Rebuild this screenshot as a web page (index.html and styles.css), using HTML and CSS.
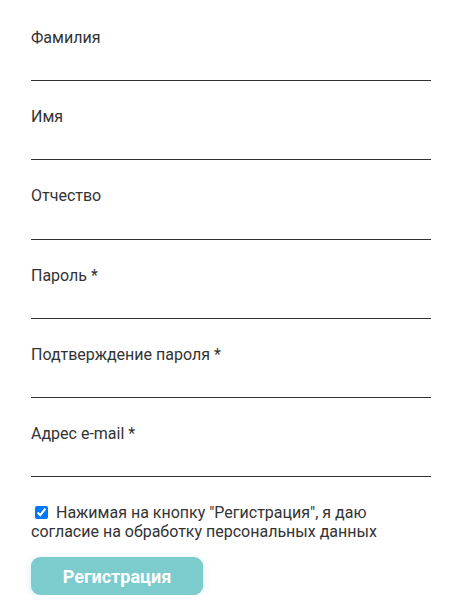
FILE: index.html
```html
<!DOCTYPE html>
<html lang="ru">

<head>
    <meta charset="UTF-8">
    <meta name="viewport" content="width=device-width, initial-scale=1.0">
    <title>Регистрация</title>
    <link rel="stylesheet" href="styles.css">
</head>

<body>
    <form class="reg-form">
        <div class="field">
            <label for="lastName">Фамилия</label>
            <input type="text" id="lastName">
        </div>
        <div class="field">
            <label for="firstName">Имя</label>
            <input type="text" id="firstName">
        </div>
        <div class="field">
            <label for="middleName">Отчество</label>
            <input type="text" id="middleName">
        </div>
        <div class="field">
            <label for="password">Пароль *</label>
            <input type="password" id="password">
        </div>
        <div class="field">
            <label for="password2">Подтверждение пароля *</label>
            <input type="password" id="password2">
        </div>
        <div class="field">
            <label for="email">Адрес e-mail *</label>
            <input type="email" id="email">
        </div>

        <div class="agree">
            <input type="checkbox" id="agree" checked>
            <label for="agree">Нажимая на кнопку "Регистрация", я даю согласие на обработку персональных данных</label>
        </div>

        <button type="submit" class="button">Регистрация</button>
    </form>
</body>

</html>
```

FILE: styles.css
```css
body {
    font-family: Roboto, "Noto Sans", sans-serif;
    margin: 0;
    padding: 0;
    background: white;
    color: #333;
}

.reg-form {
    width: 400px;
    padding: 28px 31px 0;
}

.field {
    margin-bottom: 26px;
}

.field label {
    display: block;
    font-size: 16px;
    line-height: 19.2px;
}

.field input {
    display: block;
    box-sizing: border-box;
    width: 100%;
    height: 34px;
    border: none;
    border-bottom: 1px solid #333;
    outline: none;
    padding: 0;
    font-size: 16px;
    font-family: inherit;
}

.agree {
    margin-top: 8px;
    font-size: 16px;
    line-height: 19px;
    width: 370px;
}

.agree input {
    width: 13px;
    height: 13px;
    margin: 0 4px 0 4px;
    vertical-align: -1px;
}

.button {
    margin-top: 16px;
    width: 172px;
    height: 38px;
    border: none;
    border-radius: 9px;
    background: #7ccbcd;
    color: white;
    font-family: Roboto, sans-serif;
    font-weight: bold;
    font-size: 18px;
    box-shadow: 0 2px 8px rgba(124, 203, 205, 0.3);
    cursor: pointer;
}
```
